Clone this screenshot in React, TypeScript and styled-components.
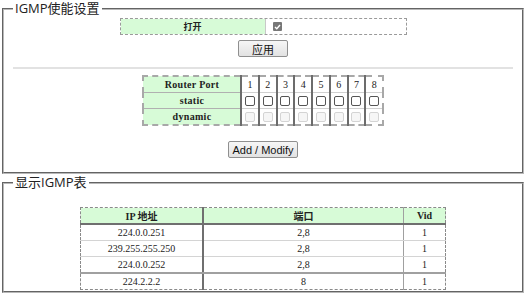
import React from 'react'
import styled, { createGlobalStyle } from 'styled-components'

const GlobalStyle = createGlobalStyle`
  html, body {
    margin: 0;
    padding: 0;
    background: #fff;
  }
  body {
    font-family: "Liberation Serif", "Noto Sans CJK SC", serif;
    color: #222;
  }
`

const Page = styled.div`
  width: 530px;
  height: 299px;
  box-sizing: border-box;
  padding: 1px 0 0 2px;
  display: flex;
  flex-direction: column;
  gap: 1px;
`

const Group = styled.fieldset<{ $h: number }>`
  margin: 0;
  padding: 0;
  min-width: 0;
  width: 522px;
  height: ${p => p.$h}px;
  box-sizing: border-box;
  border: 2px groove #b8b8b8;
`

const Legend = styled.legend`
  margin-left: 9px;
  padding: 0 2px;
  font-family: "Open Sans", "Noto Sans CJK SC", sans-serif;
  font-size: 13px;
  line-height: 15px;
  color: #222;
`

const Body = styled.div<{ $top: number }>`
  display: flex;
  flex-direction: column;
  align-items: center;
  padding-top: ${p => p.$top}px;
`

const EnableRow = styled.div`
  display: flex;
  width: 287px;
  height: 17px;
  box-sizing: border-box;
  border: 1px dashed #9a9a9a;
`

const LabelCell = styled.div`
  width: 144px;
  background: #d7fbd7;
  border-right: 1px solid #c8c8c8;
  display: flex;
  align-items: center;
  justify-content: center;
  font-size: 9px;
  font-weight: bold;
`

const ValueCell = styled.div`
  flex: 1;
  display: flex;
  align-items: center;
  padding-left: 7px;
`

const CheckedBox = styled.span`
  width: 9px;
  height: 9px;
  border-radius: 1px;
  background: #777;
  display: flex;
  align-items: center;
  justify-content: center;
`

const Button = styled.button<{ $w: number; $mt: number }>`
  width: ${p => p.$w}px;
  height: 17px;
  margin-top: ${p => p.$mt}px;
  padding: 0;
  box-sizing: border-box;
  border: 1px solid #8f8f8f;
  border-radius: 2px;
  background: linear-gradient(#f6f6f6, #e2e2e2);
  font-family: "Liberation Sans", "Noto Sans CJK SC", sans-serif;
  font-size: 11px;
  color: #111;
`

const Rule = styled.hr`
  align-self: stretch;
  margin: 10px 9px 0;
  height: 0;
  border: none;
  border-top: 2px solid #e2e2e2;
`

const PortTable = styled.table`
  margin-top: 6px;
  width: 242px;
  height: 49px;
  border-collapse: collapse;
  border: 2px dashed #a8a8a8;
  table-layout: fixed;
  font-size: 10px;
`

const HeadCell = styled.th`
  width: 96px;
  background: #d7fbd7;
  font-weight: bold;
  letter-spacing: 0.3px;
  border-bottom: 1px solid #b0b0b0;
  padding: 0;
  height: 15px;
`

const PortCell = styled.td`
  border-left: 2px solid #6c6c6c;
  border-bottom: 1px solid #d0d0d0;
  text-align: center;
  padding: 0;
  height: 15px;
`

const Box = styled.span<{ $disabled?: boolean }>`
  display: inline-block;
  vertical-align: middle;
  width: 10px;
  height: 10px;
  box-sizing: border-box;
  border-radius: 2px;
  border: 1px solid ${p => (p.$disabled ? '#d4d4d4' : '#555')};
  background: ${p => (p.$disabled ? '#f6f6f6' : '#fff')};
`

const IgmpTable = styled.table`
  width: 361px;
  border-collapse: collapse;
  border: 1px dashed #8a8a8a;
  table-layout: fixed;
  font-size: 10px;
`

const Th = styled.th<{ $w: number; $sep?: string }>`
  width: ${p => p.$w}px;
  height: 15px;
  padding: 0;
  background: #d7fbd7;
  font-weight: bold;
  border-bottom: 2px solid #6f6f6f;
  border-left: ${p => p.$sep || 'none'};
`

const Td = styled.td<{ $sep?: string; $line: string }>`
  height: 15px;
  padding: 0;
  text-align: center;
  border-left: ${p => p.$sep || 'none'};
  border-bottom: ${p => p.$line};
`

const ports = [1, 2, 3, 4, 5, 6, 7, 8]

const rows = [
  { ip: '224.0.0.251', port: '2,8', vid: '1' },
  { ip: '239.255.255.250', port: '2,8', vid: '1' },
  { ip: '224.0.0.252', port: '2,8', vid: '1' },
  { ip: '224.2.2.2', port: '8', vid: '1' },
]

export default function App() {
  return (
    <>
      <GlobalStyle />
      <Page>
        <Group $h={173}>
          <Legend>IGMP使能设置</Legend>
          <Body $top={2}>
            <EnableRow>
              <LabelCell>打开</LabelCell>
              <ValueCell>
                <CheckedBox>
                  <svg width="7" height="6" viewBox="0 0 7 6">
                    <path d="M1 3 L2.8 4.8 L6 1" fill="none" stroke="#fff" strokeWidth="1.4" />
                  </svg>
                </CheckedBox>
              </ValueCell>
            </EnableRow>
            <Button $w={50} $mt={5}>应用</Button>
            <Rule />
            <PortTable>
              <tbody>
                <tr>
                  <HeadCell>Router Port</HeadCell>
                  {ports.map(p => (
                    <PortCell key={p}>{p}</PortCell>
                  ))}
                </tr>
                <tr>
                  <HeadCell>static</HeadCell>
                  {ports.map(p => (
                    <PortCell key={p}><Box /></PortCell>
                  ))}
                </tr>
                <tr>
                  <HeadCell>dynamic</HeadCell>
                  {ports.map(p => (
                    <PortCell key={p}><Box $disabled /></PortCell>
                  ))}
                </tr>
              </tbody>
            </PortTable>
            <Button $w={70} $mt={15}>Add / Modify</Button>
          </Body>
        </Group>
        <Group $h={118}>
          <Legend>显示IGMP表</Legend>
          <Body $top={17}>
            <IgmpTable>
              <thead>
                <tr>
                  <Th $w={121}>IP 地址</Th>
                  <Th $w={199} $sep="2px solid #6f6f6f">端口</Th>
                  <Th $w={41} $sep="1px solid #a0a0a0">Vid</Th>
                </tr>
              </thead>
              <tbody>
                {rows.map((r, i) => {
                  const line =
                    i === 2 ? '2px solid #a0a0a0' : i === 3 ? 'none' : '1px solid #d4d4d4'
                  return (
                    <tr key={r.ip}>
                      <Td $line={line}>{r.ip}</Td>
                      <Td $line={line} $sep="2px solid #6f6f6f">{r.port}</Td>
                      <Td $line={line} $sep="1px solid #a0a0a0">{r.vid}</Td>
                    </tr>
                  )
                })}
              </tbody>
            </IgmpTable>
          </Body>
        </Group>
      </Page>
    </>
  )
}
